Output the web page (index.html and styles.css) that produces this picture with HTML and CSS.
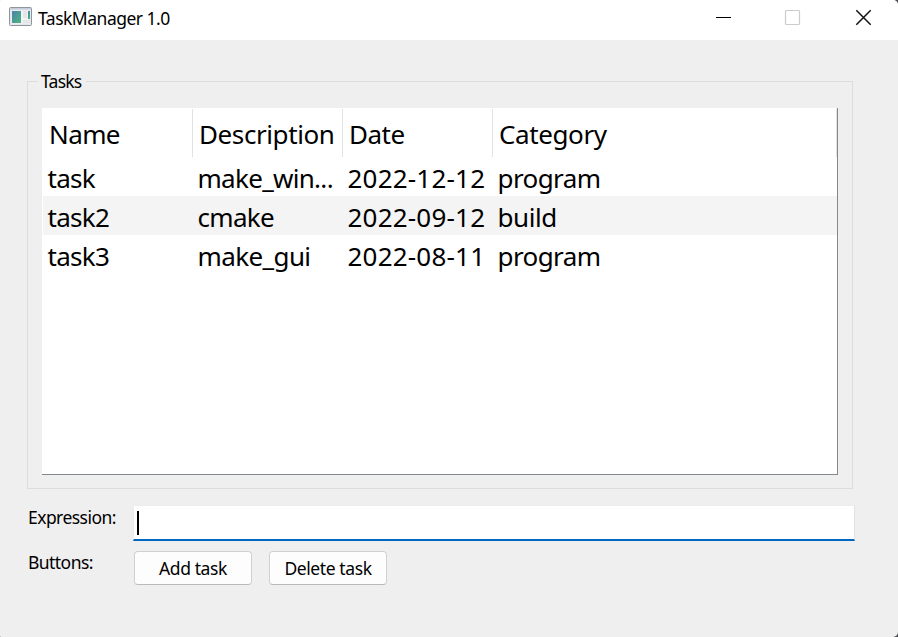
FILE: index.html
```html
<!DOCTYPE html>
<html lang="en">
<head>
<meta charset="utf-8">
<title>TaskManager 1.0</title>
<link rel="stylesheet" href="styles.css">
</head>
<body>
<div class="window">
  <header class="titlebar">
    <svg class="app-icon" width="23" height="19" viewBox="0 0 23 19">
      <defs>
        <linearGradient id="pane" x1="0" y1="0" x2="1" y2="1"><stop offset="0" stop-color="#4b82ae"/><stop offset="1" stop-color="#4fb57c"/></linearGradient>
      </defs>
      <rect x="0.5" y="0.5" width="22" height="18" rx="1" fill="#e4e7eb" stroke="#8e959d"/>
      <rect x="1" y="1" width="21" height="1.5" fill="#c3cddb"/>
      <rect x="2.5" y="3.5" width="18" height="13" fill="#f3f4f5"/>
      <rect x="3" y="4" width="9" height="12" fill="url(#pane)"/>
      <rect x="14" y="4" width="4" height="7" fill="#e5e6e6"/>
      <rect x="19" y="4" width="2" height="8" fill="url(#pane)"/>
      <rect x="14" y="13" width="7" height="3" fill="#e5e6e6"/>
    </svg>
    <span class="title">TaskManager 1.0</span>
    <svg class="controls" width="157" height="17" viewBox="0 0 157 17">
      <path d="M0 8.5H15" stroke="#000" fill="none"/>
      <rect x="69.5" y="1.5" width="14" height="14" rx="1" fill="none" stroke="#ccc" stroke-width="1.2"/>
      <path d="M140.3 1.3L154.7 15.7M154.7 1.3L140.3 15.7" stroke="#111" stroke-width="1.5" fill="none"/>
    </svg>
  </header>
  <main>
    <fieldset class="group">
      <legend>Tasks</legend>
      <div class="table">
        <div class="row head"><span class="cell"><span class="t-name">Name</span></span><span class="cell"><span class="t-desc">Description</span></span><span class="cell"><span class="t-date">Date</span></span><span class="cell"><span class="t-cat">Category</span></span></div>
        <div class="row"><span class="cell"><span class="t-task">task</span></span><span class="cell"><span class="t-win">make_win...</span></span><span class="cell"><span class="t-day">2022-12-12</span></span><span class="cell"><span class="t-prog">program</span></span></div>
        <div class="row alt"><span class="cell"><span class="t-task">task2</span></span><span class="cell"><span class="t-cmake">cmake</span></span><span class="cell"><span class="t-day">2022-09-12</span></span><span class="cell"><span class="t-build">build</span></span></div>
        <div class="row"><span class="cell"><span class="t-task">task3</span></span><span class="cell"><span class="t-gui">make_gui</span></span><span class="cell"><span class="t-day">2022-08-11</span></span><span class="cell"><span class="t-prog">program</span></span></div>
      </div>
    </fieldset>
    <div class="form">
      <label class="l-expr">Expression:</label>
      <div class="input"><i class="caret"></i></div>
      <label class="l-btn">Buttons:</label>
      <div class="buttons"><button class="add">Add task</button><button class="del">Delete task</button></div>
    </div>
  </main>
</div>
</body>
</html>
```
FILE: styles.css
```css
* { box-sizing: border-box; }
body { margin: 0; background: #4a4a52; color: #000; font: 17.5px/24px "Noto Sans", "Open Sans", sans-serif; letter-spacing: -0.55px; }
.window { width: 898px; height: 637px; overflow: hidden; background: #efefef; border-radius: 1px 5px 5px 1px; }
.titlebar { height: 40px; background: #fff; display: flex; align-items: flex-start; padding: 7px 25px 0 9px; }
.app-icon { display: block; }
.title { margin: -1px auto 0 6px; white-space: nowrap; letter-spacing: -0.5px; }
.controls { display: block; margin-top: 2px; }
main { padding: 29px 43px 0 27px; }
.group { margin: 0; width: 826px; height: 420px; padding: 15px 14px 13px; border: 1px solid #dcdcdc; }
.group legend { height: 24px; margin-left: -4px; padding: 0 4px 0 3px; letter-spacing: -0.75px; }
.table { width: 796px; height: 367px; background: #fff; border-right: 1px solid #828790; border-bottom: 1px solid #828790; padding: 1px 0 0 1px; font-size: 26px; }
.row { display: grid; grid-template-columns: 150px 150px 150px 1fr; height: 39px; line-height: 43px; }
.alt { background: #f4f4f4; }
.cell { height: 39px; padding-left: 4.5px; white-space: nowrap; }
.head { height: 48px; line-height: 50px; }
.head .cell { height: 48px; padding-left: 6px; border-right: 1px solid #e2e2e2; }
.t-name { letter-spacing: -0.6px; }
.t-desc, .t-cat { letter-spacing: -0.4px; }
.t-date { letter-spacing: -0.5px; }
.t-task, .t-win, .t-cmake { letter-spacing: -0.7px; }
.t-day { letter-spacing: 0.2px; }
.t-prog, .t-gui { letter-spacing: -0.6px; }
.t-build { letter-spacing: -0.4px; }
.form { display: grid; grid-template-columns: 106px 722px; row-gap: 10px; margin-top: 16px; }
.form label { padding-left: 1px; }
.l-btn { margin-top: -1px; }
.input { height: 36px; background: #fff; border: 1px solid #ececec; border-right-color: #dfe3e8; border-bottom: 2px solid #0067c0; }
.caret { display: block; width: 2px; height: 24px; margin: 5px 0 0 3px; background: #000; }
.buttons { display: flex; gap: 17px; padding-left: 1px; }
button { width: 118px; height: 34px; margin: 0; padding: 0; border: 1px solid #d0d0d0; border-bottom-color: #bababa; border-radius: 4px; background: #fdfdfd; color: #000; font: inherit; letter-spacing: -0.4px; }
```
